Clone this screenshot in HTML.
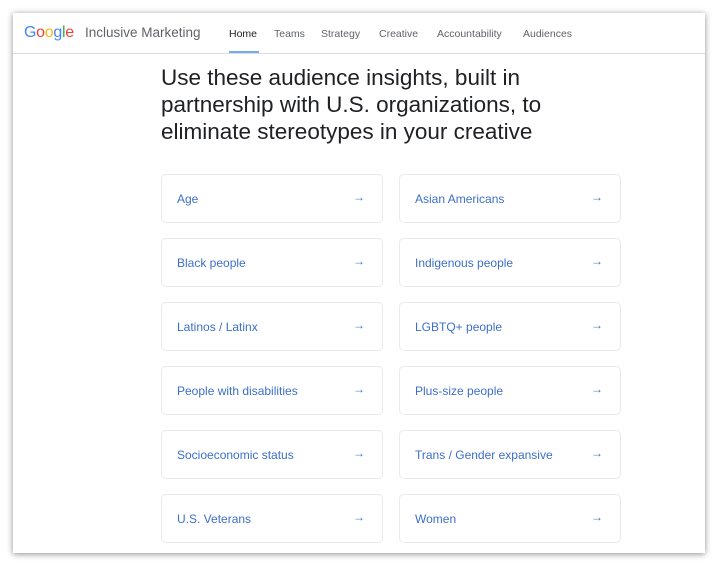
<!DOCTYPE html>
<html><head><meta charset="utf-8"><style>
*{box-sizing:border-box;margin:0;padding:0}
body{width:720px;height:575px;background:#fff;font-family:"Liberation Sans",sans-serif;position:relative;overflow:hidden}
.win{position:absolute;left:13px;top:13px;width:692px;height:540px;background:#fff;box-shadow:0 1px 6px rgba(0,0,0,.45)}
.hdr{position:absolute;left:0;top:0;width:692px;height:41px;border-bottom:1px solid #dadce0}
.logo{position:absolute;left:11px;top:11px;font-size:16px;letter-spacing:-0.3px}
.title{position:absolute;left:72px;top:12px;font-size:13.5px;color:#5f6368}
.nav{position:absolute;top:15px;font-size:10.5px;color:#5f6368}
.ul{position:absolute;left:216px;top:38px;width:30px;height:2px;background:#1a73e8;opacity:.6}
h1{position:absolute;left:148px;top:51px;font-weight:normal;font-size:22.5px;line-height:27px;color:#202124;width:440px}
.card{position:absolute;width:222px;height:49px;border:1px solid #e8eaed;border-radius:5px;font-size:12px;padding:17px 0 0 15px;color:#3c6fc9}
.card span{position:absolute;right:17px;top:15px;font-size:12px}
</style></head><body>
<div class="win">
<div class="hdr">
<div class="logo"><span style="color:#4285f4">G</span><span style="color:#ea4335">o</span><span style="color:#fbbc05">o</span><span style="color:#4285f4">g</span><span style="color:#34a853">l</span><span style="color:#ea4335">e</span></div>
<div class="title">Inclusive Marketing</div>
<div class="nav" style="left:216px;color:#202124">Home</div>
<div class="nav" style="left:261px">Teams</div>
<div class="nav" style="left:308px">Strategy</div>
<div class="nav" style="left:366px">Creative</div>
<div class="nav" style="left:424px">Accountability</div>
<div class="nav" style="left:510px">Audiences</div>
<div class="ul"></div>
</div>
<h1>Use these audience insights, built in partnership with U.S. organizations, to eliminate stereotypes in your creative</h1>
<div class="card" style="left:148px;top:161px">Age<span>→</span></div>
<div class="card" style="left:386px;top:161px">Asian Americans<span>→</span></div>
<div class="card" style="left:148px;top:225px">Black people<span>→</span></div>
<div class="card" style="left:386px;top:225px">Indigenous people<span>→</span></div>
<div class="card" style="left:148px;top:289px">Latinos / Latinx<span>→</span></div>
<div class="card" style="left:386px;top:289px">LGBTQ+ people<span>→</span></div>
<div class="card" style="left:148px;top:353px">People with disabilities<span>→</span></div>
<div class="card" style="left:386px;top:353px">Plus-size people<span>→</span></div>
<div class="card" style="left:148px;top:417px">Socioeconomic status<span>→</span></div>
<div class="card" style="left:386px;top:417px">Trans / Gender expansive<span>→</span></div>
<div class="card" style="left:148px;top:481px">U.S. Veterans<span>→</span></div>
<div class="card" style="left:386px;top:481px">Women<span>→</span></div>
</div>
</body></html>
